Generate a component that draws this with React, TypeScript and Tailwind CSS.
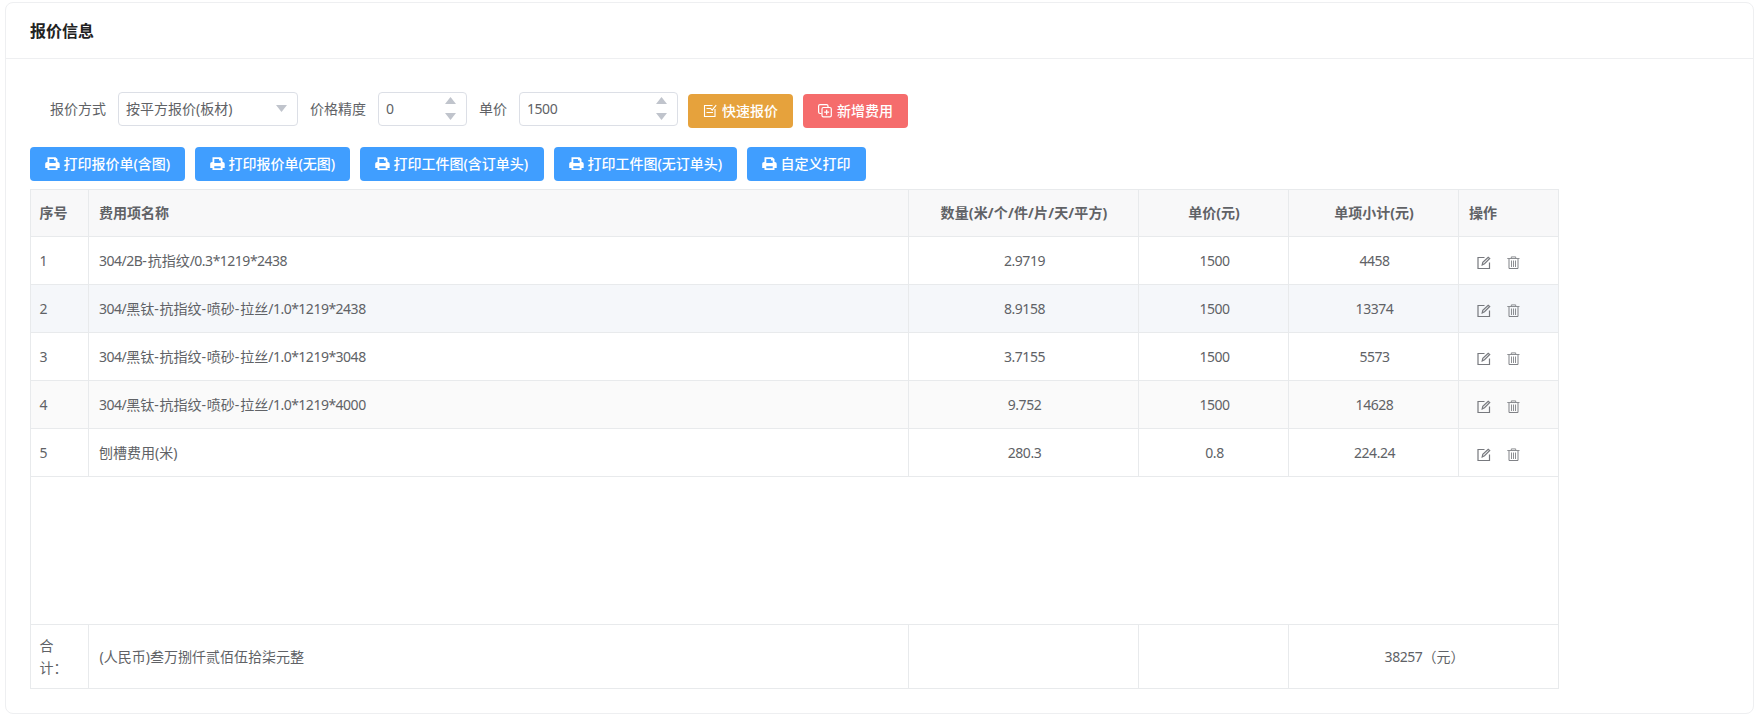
import type { ReactNode } from 'react'

const PrintIcon = () => (
    <svg className="h-[14px] w-[15px] shrink-0" viewBox="0 0 15 14" fill="currentColor">
        <path fillRule="evenodd" d="M2.500 0.300h8L12.500 2v3h0.300c1.100 0 1.900 0.800 1.900 1.900v4.200H12.500V13H2.500v-1.900H0.200V6.900C0.200 5.800 1 5 2.100 5H2.500V0.300zM4.300 1.900v4.100h6.400V3.500H9V1.900H4.300zM4.300 9.200v2.100h6.400V9.200H4.300z" />
    </svg>
)

const QuickIcon = () => (
    <svg className="h-[14px] w-[14px] shrink-0" viewBox="0 0 14 14" fill="none" stroke="currentColor" strokeWidth="1.1">
        <path d="M9.500 1.500H1.500v11h10.500V5" />
        <path d="M3.500 4.500h4M3.500 8.500h6.500M7.300 4.200l1.900 1.900 4-5" />
    </svg>
)

const AddIcon = () => (
    <svg className="h-[14px] w-[14px] shrink-0" viewBox="0 0 14 14" fill="none" stroke="currentColor" strokeWidth="1.2">
        <path d="M3.500 9.500H2C1.200 9.500 0.600 8.900 0.600 8.100V2c0-0.800 0.600-1.400 1.400-1.400h6.600c0.800 0 1.400 0.600 1.400 1.400v1.500" />
        <rect x="4" y="3.500" width="9.300" height="9.300" rx="1.400" />
        <path d="M8.650 5.700v5M6.150 8.200h5" />
    </svg>
)

const EditIcon = () => (
    <svg className="h-[14px] w-[14px]" viewBox="0 0 14 14" fill="none" stroke="#77797e" strokeWidth="1.2">
        <path d="M7.500 1.500H1v11h11.500V6.500" />
        <path d="M5.200 8.800l0.600-2.600 5.400-5 1.500 1.300-5.200 5.200z" />
    </svg>
)

const TrashIcon = () => (
    <svg className="h-[14px] w-[13px]" viewBox="0 0 13 14" fill="none" stroke="#808287">
        <path d="M0.300 2.500h12.200M4.300 2.300V0.900h4.400v1.400" strokeWidth="0.900" />
        <path d="M2 3v9.500h9V3" strokeWidth="1" />
        <path d="M4.500 4.500v6.500M6.500 4.500v6.500M8.500 4.500v6.500" strokeWidth="0.900" />
    </svg>
)

// latin runs are set a bit tighter than the chinese ones
const Mixed = ({ text }: { text: string }) => (
    <span>
        {text.split(/([0-9A-Z./*]+|-)/).map((part, i) => {
            if (part === '-') return <span key={i} className="tracking-[0.8px]">-</span>
            if (/^[0-9A-Z./*]/.test(part)) return <span key={i} className="tracking-[-0.5px]">{part}</span>
            return part
        })}
    </span>
)

const Spinner = ({ value, width }: { value: string; width: string }) => (
    <div className={`flex h-[34px] items-center justify-between rounded-[4px] border border-[#dcdfe6] pr-[10px] pl-[7px] ${width}`}>
        <span className="tracking-[-0.45px]">{value}</span>
        <span className="flex -translate-y-px flex-col gap-[9px]">
            <svg className="h-[7px] w-[11px]" viewBox="0 0 11 7" fill="#c0c4cc"><path d="M5.500 0L11 7H0z" /></svg>
            <svg className="h-[7px] w-[11px]" viewBox="0 0 11 7" fill="#c0c4cc"><path d="M5.500 7L11 0H0z" /></svg>
        </span>
    </div>
)

const Button = ({ icon, className, children }: { icon: ReactNode; className: string; children: ReactNode }) => (
    <button className={`flex h-[34px] items-center rounded-[4px] whitespace-nowrap text-white ${className}`}>
        {icon}
        <span>{children}</span>
    </button>
)

const prints = [
    { label: '打印报价单(含图)', width: 'w-[155px]' },
    { label: '打印报价单(无图)', width: 'w-[155px]' },
    { label: '打印工件图(含订单头)', width: 'w-[184px]' },
    { label: '打印工件图(无订单头)', width: 'w-[183px]' },
    { label: '自定义打印', width: 'w-[119px]' },
]

const rows = [
    { name: '304/2B-抗指纹/0.3*1219*2438', count: '2.9719', price: '1500', total: '4458', bg: 'bg-white' },
    { name: '304/黑钛-抗指纹-喷砂-拉丝/1.0*1219*2438', count: '8.9158', price: '1500', total: '13374', bg: 'bg-[#f5f7fa]' },
    { name: '304/黑钛-抗指纹-喷砂-拉丝/1.0*1219*3048', count: '3.7155', price: '1500', total: '5573', bg: 'bg-white' },
    { name: '304/黑钛-抗指纹-喷砂-拉丝/1.0*1219*4000', count: '9.752', price: '1500', total: '14628', bg: 'bg-[#fafafa]' },
    { name: '刨槽费用(米)', count: '280.3', price: '0.8', total: '224.24', bg: 'bg-white' },
]

const cols = 'grid grid-cols-[58px_820px_230px_150px_170px_100px]'
const cell = 'flex items-center border-r border-b border-[#e8eaec]'
const num = 'justify-center pl-[2px] tracking-[-0.45px]'

const App = () => {
    return (
        <div className="h-[722px] w-full bg-white pt-[2px] pr-[3px] pl-[5px] font-['Noto_Sans','Noto_Sans_CJK_SC',sans-serif] text-[14px] leading-[22px] text-[#606266]">
            <div className="h-[712px] rounded-[8px] border border-[#eeeff1]">
                <div className="flex h-[56px] items-center border-b border-[#eeeff1] pl-6 text-[16px] font-bold text-[#222]">
                    报价信息
                </div>

                <div className="pt-[33px] pl-6">
                    <div className="flex h-[36px] items-start pl-5">
                        <span className="w-[68px] leading-[34px]">报价方式</span>
                        <div className="flex h-[34px] w-[180px] items-center justify-between rounded-[4px] border border-[#dcdfe6] pr-[10px] pl-[7px]">
                            <span>按平方报价(板材)</span>
                            <svg className="mb-0.5 h-[7px] w-[11px]" viewBox="0 0 11 7" fill="#c0c4cc"><path d="M5.500 7L11 0H0z" /></svg>
                        </div>
                        <span className="ml-3 w-[68px] leading-[34px]">价格精度</span>
                        <Spinner value="0" width="w-[89px]" />
                        <span className="ml-3 w-10 leading-[34px]">单价</span>
                        <Spinner value="1500" width="w-[159px]" />
                        <Button icon={<QuickIcon />} className="mt-[2px] ml-[10px] w-[105px] gap-[5px] bg-[#e6a23c] pl-[15px] font-medium">快速报价</Button>
                        <Button icon={<AddIcon />} className="mt-[2px] ml-[10px] w-[105px] gap-[5px] bg-[#f56c6c] pl-[15px] font-medium">新增费用</Button>
                    </div>

                    <div className="mt-[19px] flex gap-[10px]">
                        {prints.map((p) => (
                            <Button key={p.label} icon={<PrintIcon />} className={`gap-[4px] bg-[#409eff] pl-[14.5px] font-medium ${p.width}`}>{p.label}</Button>
                        ))}
                    </div>

                    {/* fee table */}
                    <div className="mt-2 w-[1529px] border-t border-l border-[#e8eaec]">
                        <div className={`h-[47px] bg-[#f8f8f9] font-bold ${cols}`}>
                            <div className={`pl-[8.5px] ${cell}`}>序号</div>
                            <div className={`pl-[10px] ${cell}`}>费用项名称</div>
                            <div className={`justify-center pl-px tracking-[0.15px] ${cell}`}>数量(米/个/件/片/天/平方)</div>
                            <div className={`justify-center pl-px ${cell}`}>单价(元)</div>
                            <div className={`justify-center pl-px ${cell}`}>单项小计(元)</div>
                            <div className={`pl-[10px] ${cell}`}>操作</div>
                        </div>
                        {rows.map((row, i) => (
                            <div key={i} className={`h-12 ${cols} ${row.bg}`}>
                                <div className={`pl-[8.5px] ${cell}`}>{i + 1}</div>
                                <div className={`pl-[10px] ${cell}`}><Mixed text={row.name} /></div>
                                <div className={`${num} ${cell}`}>{row.count}</div>
                                <div className={`${num} ${cell}`}>{row.price}</div>
                                <div className={`${num} ${cell}`}>{row.total}</div>
                                <div className={`gap-4 pt-[5px] pl-[18px] ${cell}`}>
                                    <EditIcon />
                                    <TrashIcon />
                                </div>
                            </div>
                        ))}
                        <div className="h-[148px] border-r border-b border-[#e8eaec]"></div>
                        <div className="grid h-16 grid-cols-[58px_820px_230px_150px_270px]">
                            <div className={`pr-4 pl-[8.5px] ${cell}`}>
                                <span>合<br />计：</span>
                            </div>
                            <div className={`pl-[10.5px] ${cell}`}>(人民币)叁万捌仟贰佰伍拾柒元整</div>
                            <div className={cell}></div>
                            <div className={cell}></div>
                            <div className={`justify-center pl-[2px] ${cell}`}>
                                <span className="tracking-[-0.45px]">38257</span>（元）
                            </div>
                        </div>
                    </div>
                </div>
            </div>
        </div>
    )
}

export default App
